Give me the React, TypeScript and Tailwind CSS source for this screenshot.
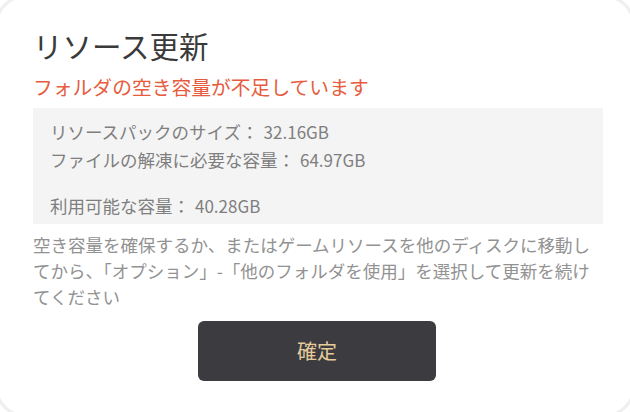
import React from 'react'

const font = { fontFamily: '"Noto Sans CJK JP", "Noto Sans", sans-serif' }

function InfoRow({ label, value, className = '' }: { label: string; value: string; className?: string }) {
  return (
    <div className={`h-[24px] leading-[24px] ${className}`}>
      {label}：<span className="ml-[5px] text-[17px]">{value}</span>
    </div>
  )
}

export default function App() {
  return (
    <div className="h-[412px] w-[630px] overflow-hidden bg-white" style={font}>
      <div className="-m-[5px] h-[422px] rounded-[30px] border-[3px] border-[#efefef] bg-white pl-[35px] pr-[25px] pt-[27px]">
        <h1 className="h-[40px] text-[29.5px] font-normal leading-[40px] text-[#3a3a3a]">リソース更新</h1>
        <p className="mt-[9px] h-[26px] text-[19.8px] leading-[26px] text-[#e65c3e]">フォルダの空き容量が不足しています</p>

        <div className="mt-[8px] h-[116px] w-[570px] bg-[#f4f4f4] pl-[17px] pt-[12px] text-[17.5px] text-[#7f7f7f]">
          <InfoRow label="リソースパックのサイズ" value="32.16GB" />
          <InfoRow label="ファイルの解凍に必要な容量" value="64.97GB" className="mt-[4px]" />
          <InfoRow label="利用可能な容量" value="40.28GB" className="mt-[22px]" />
        </div>

        <p className="mt-[8px] w-[570px] text-[17.5px] leading-[26px] text-[#929292]">
          空き容量を確保するか、またはゲームリソースを他のディスクに移動してから、「オプション」-「他のフォルダを使用」を選択して更新を続けてください
        </p>

        <button className="ml-[165px] mt-[11px] flex h-[60px] w-[238px] items-center justify-center rounded-[6px] bg-[#3b3b40] text-[20px] text-[#e6cc9c]">
          確定
        </button>
      </div>
    </div>
  )
}
